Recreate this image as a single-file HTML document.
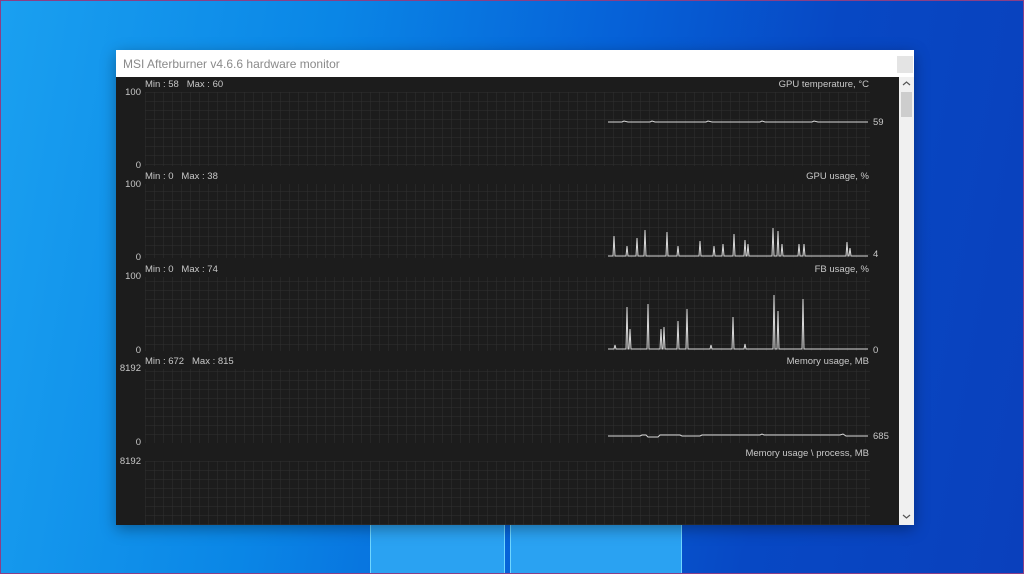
<!DOCTYPE html>
<html><head><meta charset="utf-8"><style>
html,body{margin:0;padding:0;width:1024px;height:574px;overflow:hidden}
body{background:linear-gradient(100deg,#1aa0f0 0%,#0a86e6 30%,#0662d8 55%,#0748c4 75%,#0a40bc 100%);position:relative;font-family:"Liberation Sans",sans-serif}
.frame{position:absolute;inset:0;border:1px solid #8a3f86;box-sizing:border-box}
.tb{position:absolute;background:#2aa2f2;border-left:1px solid #6fd6ff;border-right:1px solid #6fd6ff}
.win{position:absolute;left:116px;top:50px;width:798px;height:475px;background:#fff;box-shadow:0 4px 14px rgba(0,0,0,.35)}
.title{position:absolute;left:7px;top:7px;font-size:12px;color:#8a8a8a}
.close{position:absolute;left:781px;top:6px;width:16px;height:17px;background:#e4e4e4}
.dark{position:absolute;left:0;top:27px;width:783px;height:448px;background:#1c1c1c}
.sb{position:absolute;left:783px;top:27px;width:15px;height:448px;background:#f0f0f0}
.thumb{position:absolute;left:2px;top:15px;width:11px;height:25px;background:#cdcdcd}
</style></head><body>
<div class="tb" style="left:370px;top:525px;width:133px;height:49px"></div>
<div class="tb" style="left:510px;top:525px;width:170px;height:49px"></div>
<div class="win">
<div class="title">MSI Afterburner v4.6.6 hardware monitor</div>
<div class="close"></div>
<div class="dark"></div>
<div class="sb"><div class="thumb"></div>
<svg style="position:absolute;left:3px;top:3px" width="9" height="7"><path d="M1 5L4.5 2L8 5" stroke="#555" fill="none" stroke-width="1.2"/></svg>
<svg style="position:absolute;left:3px;top:436px" width="9" height="7"><path d="M1 2L4.5 5L8 2" stroke="#555" fill="none" stroke-width="1.2"/></svg>
</div>
</div>
<svg style="position:absolute;left:0;top:0" width="1024" height="574" font-family="Liberation Sans, sans-serif" font-size="9.5" fill="#c8c8c8">
<defs><pattern id="g" x="145" y="92" width="9" height="9" patternUnits="userSpaceOnUse"><path d="M0 0H9M0 0V9" stroke="#303030" stroke-width="1"/></pattern></defs>
<rect x="145" y="92" width="725" height="74" fill="url(#g)"/>
<rect x="145" y="184" width="725" height="74" fill="url(#g)"/>
<rect x="145" y="277" width="725" height="74" fill="url(#g)"/>
<rect x="145" y="369" width="725" height="74" fill="url(#g)"/>
<rect x="145" y="461" width="725" height="64" fill="url(#g)"/>
<g>
<text x="145" y="87">Min : 58&#160;&#160;&#160;Max : 60</text><text x="869" y="87" text-anchor="end">GPU temperature, °C</text>
<text x="141" y="95" text-anchor="end">100</text><text x="141" y="168" text-anchor="end">0</text><text x="873" y="125">59</text>
<text x="145" y="179">Min : 0&#160;&#160;&#160;Max : 38</text><text x="869" y="179" text-anchor="end">GPU usage, %</text>
<text x="141" y="187" text-anchor="end">100</text><text x="141" y="260" text-anchor="end">0</text><text x="873" y="257">4</text>
<text x="145" y="272">Min : 0&#160;&#160;&#160;Max : 74</text><text x="869" y="272" text-anchor="end">FB usage, %</text>
<text x="141" y="279" text-anchor="end">100</text><text x="141" y="353" text-anchor="end">0</text><text x="873" y="353">0</text>
<text x="145" y="364">Min : 672&#160;&#160;&#160;Max : 815</text><text x="869" y="364" text-anchor="end">Memory usage, MB</text>
<text x="141" y="371" text-anchor="end">8192</text><text x="141" y="445" text-anchor="end">0</text><text x="873" y="439">685</text>
<text x="869" y="456" text-anchor="end">Memory usage \ process, MB</text>
<text x="141" y="464" text-anchor="end">8192</text>
</g>
<g stroke="#d8d8d8" fill="none" stroke-width="1">
<path d="M608 122H622L624 121L628 122H650L652 121L655 122H706L708 121L712 122H760L762 121L765 122H812L814 121L818 122H868"/>
<path d="M608 256H613L614 236L615 256H626L627 246L628 256H636L637 238L638 256H644L645 230L646 256H666L667 232L668 256H677L678 246L679 256H699L700 241L701 256H713L714 246L715 256H722L723 244L724 256H733L734 234L735 256H744L745 240L746 256H747L748 244L749 256H772L773 228L774 256H777L778 231L779 256H781L782 244L783 256H798L799 244L800 256H803L804 244L805 256H846L847 242L848 256H849L850 248L851 256H868"/>
<path d="M608 349H614L615 345L616 349H626L627 307L628 349H629L630 329L631 349H647L648 304L649 349H660L661 329L662 349H663L664 327L665 349H677L678 321L679 349H686L687 309L688 349H710L711 345L712 349H732L733 317L734 349H744L745 344L746 349H773L774 295L775 349H777L778 311L779 349H802L803 299L804 349H868"/>
<path d="M608 436H640L642 435H646L648 437H658L660 435H680L682 436H700L702 435H760L762 434L764 435H830H840L843 434L846 436H868"/>
</g>
</svg>
<div class="frame"></div>
</body></html>
